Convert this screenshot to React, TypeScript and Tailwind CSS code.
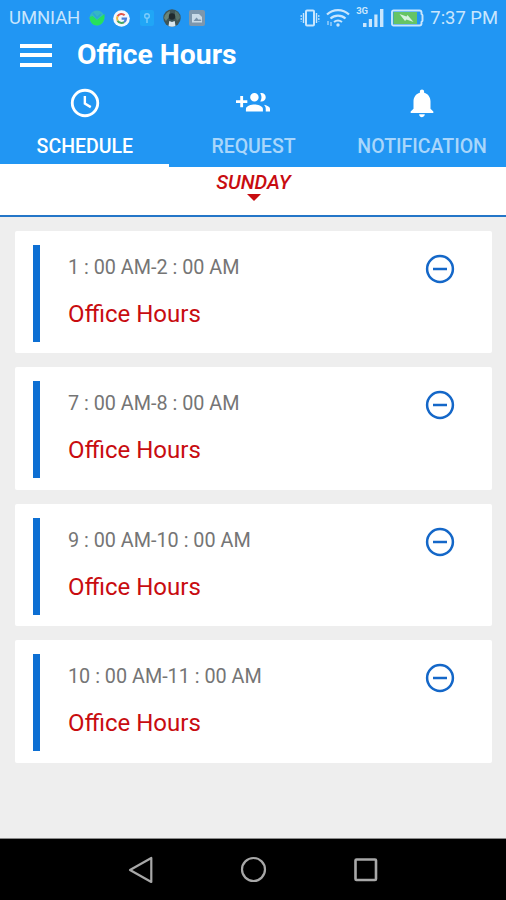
import { useState } from 'react';
import { MdNotifications } from 'react-icons/md';

type IconProps = { className?: string };

const ClockIcon: React.FC<IconProps> = ({ className }) => (
  <svg className={className} viewBox="0 0 24 24" fill="none" stroke="currentColor">
    <circle cx="12" cy="12" r="9" strokeWidth="2" />
    <path d="M11.900 7v5.400l4.200 2.500" strokeWidth="1.700" />
  </svg>
);

const GroupAddIcon: React.FC<IconProps> = ({ className }) => (
  <svg className={className} viewBox="0 0 24 24" fill="currentColor">
    <path d="M8 10H5V7H3v3H0v2h3v3h2v-3h3v-2zm10 1c1.660 0 2.990-1.340 2.990-3S19.660 5 18 5c-.32 0-.63.05-.91.14.57.81.9 1.790.9 2.860s-.34 2.040-.9 2.860c.28.09.59.14.91.14zm-5 0c1.660 0 2.990-1.340 2.990-3S14.660 5 13 5c-1.660 0-3 1.340-3 3s1.340 3 3 3zm6.620 2.160c.83.73 1.380 1.660 1.380 2.840v2h3v-2c0-1.540-2.370-2.490-4.380-2.840zM13 13c-2 0-6 1-6 3v2h12v-2c0-2-4-3-6-3z" />
  </svg>
);

// Tabs shown under the app bar
const tabs = [
  { id: 'schedule', label: 'SCHEDULE', Icon: ClockIcon },
  { id: 'request', label: 'REQUEST', Icon: GroupAddIcon },
  { id: 'notification', label: 'NOTIFICATION', Icon: MdNotifications },
];

const slots = [
  { id: 1, time: '1 : 00 AM-2 : 00 AM', title: 'Office Hours' },
  { id: 2, time: '7 : 00 AM-8 : 00 AM', title: 'Office Hours' },
  { id: 3, time: '9 : 00 AM-10 : 00 AM', title: 'Office Hours' },
  { id: 4, time: '10 : 00 AM-11 : 00 AM', title: 'Office Hours' },
];

const StatusBar: React.FC = () => (
  <div className="flex h-9 items-center justify-between pl-[9px] pr-[8px] text-[#c9e6fd]">
    <div className="flex items-center">
      <span className="w-[80px] whitespace-nowrap text-[18.5px] leading-9 tracking-[-0.1px]">UMNIAH</span>
      <svg className="h-4 w-4" viewBox="0 0 16 16">
        <circle cx="8" cy="8" r="7.500" fill="#35b7c4" />
        <path d="M.600 7l3-1L8 10l7.400-6c.8 6-2 11.500-7.400 11.500C4 15.500.600 12 .600 7z" fill="#26e05c" />
        <path d="M4 3l4 5 4-4" fill="none" stroke="#2ba5d8" strokeWidth="1.500" />
      </svg>
      <svg className="ml-[8px] h-[17px] w-[17px]" viewBox="0 0 17 17">
        <circle cx="8.500" cy="8.500" r="8.300" fill="#f4f8fd" />
        <g fill="none" strokeWidth="2.100">
          <path d="M11.600 5.200A4.500 4.500 0 0 0 4.600 6.300" stroke="#e2574c" />
          <path d="M4.600 6.300a4.500 4.500 0 0 0 0 4.400" stroke="#efb93c" />
          <path d="M4.600 10.700a4.500 4.500 0 0 0 6.500 1.400" stroke="#45a765" />
          <path d="M11.100 12.100A4.500 4.500 0 0 0 13 8.600H8.600" stroke="#4a7fdc" />
        </g>
      </svg>
      <svg className="ml-[10px] h-4 w-[14px]" viewBox="0 0 14 16">
        <rect width="14" height="16" rx="2" fill="#20a6f6" />
        <circle cx="7" cy="6" r="2.300" fill="none" stroke="#7ccdfb" strokeWidth="1.400" />
        <path d="M7 8v5" stroke="#7ccdfb" strokeWidth="1.400" />
      </svg>
      <svg className="ml-[9px] h-[18px] w-[18px]" viewBox="0 0 18 18">
        <circle cx="9" cy="9" r="8.700" fill="#3f5557" />
        <path d="M1 9c1-4 3-6 6-7l-1 6-3 4z" fill="#6b8578" />
        <path d="M12 2c3 1 5 4 5 7l-3 3-2-5z" fill="#56726b" />
        <circle cx="9" cy="7.500" r="3.200" fill="#202a2e" />
        <path d="M5.500 17l.8-5 2.700 1 2.700-1 .8 5c-2 1-5 1-7 0z" fill="#d8e6ed" />
      </svg>
      <svg className="ml-[8px] h-4 w-4" viewBox="0 0 16 16">
        <rect width="16" height="16" rx="2" fill="#7d97ad" />
        <path d="M3 4h7l3 3v5.500H3z" fill="#c9dbe8" />
        <path d="M4.500 11l3-3.500L10 10l1-1 1.500 2z" fill="#7892a9" />
      </svg>
    </div>
    <div className="flex items-center">
      <svg className="h-[18px] w-5" viewBox="0 0 20 18" fill="none" stroke="currentColor">
        <rect x="6" y="1.500" width="8" height="15" rx="1" strokeWidth="2" />
        <path d="M3.500 4v10M16.500 4v10" strokeWidth="1.400" />
        <path d="M1.200 6v6.500M18.800 6v6.500" strokeWidth="1.200" strokeDasharray="2 1" />
      </svg>
      <svg className="ml-[6px] h-[18px] w-6" viewBox="0 0 24 18" fill="none" stroke="currentColor">
        <path d="M1 5.500a16 16 0 0 1 22 0" strokeWidth="2.200" />
        <path d="M4.500 9.500a11 11 0 0 1 15 0" strokeWidth="2.200" />
        <path d="M8 13a6.500 6.500 0 0 1 8 0" strokeWidth="2" />
        <circle cx="12" cy="16" r="1.700" fill="currentColor" stroke="none" />
        <path d="M2 12v4M5 13v4" strokeWidth="1.500" opacity="0.7" />
      </svg>
      <div className="ml-[6px] flex h-[24px] w-[28px]">
        <span className="w-[7px] text-[9.5px] font-bold leading-[9px] tracking-[-0.3px]">3G</span>
        <svg className="mt-[3px] h-[18px] w-[21px]" viewBox="0 0 21 18" fill="currentColor">
          <rect x="0" y="14" width="3.500" height="4" />
          <rect x="5.800" y="10" width="3.200" height="8" />
          <rect x="11.300" y="5.500" width="3.200" height="12.500" />
          <rect x="17" y="0" width="3.400" height="18" />
        </svg>
      </div>
      <svg className="ml-[7px] h-[18px] w-[33px]" viewBox="0 0 33 18">
        <path d="M2.500 1.500h26a2 2 0 0 1 2 2V5q1 .6 1 1.500v5q0 .9-1 1.500v1.500a2 2 0 0 1-2 2h-26a1.500 1.500 0 0 1-1.500-1.500V3a1.500 1.500 0 0 1 1.500-1.500z" fill="none" stroke="currentColor" strokeWidth="1.900" />
        <rect x="2.500" y="3" width="23.500" height="12" fill="#65c466" />
        <path d="M8.500 5l7 2.500 1-1.500 6 7-7-2.500-1.500 1.500z" fill="#d5f3e0" />
      </svg>
      <span className="ml-[6px] whitespace-nowrap text-[18.4px] leading-9">7:37 PM</span>
    </div>
  </div>
);

const NavigationBar: React.FC = () => (
  <div className="flex h-[62px] items-center justify-center gap-[84px] border-t border-[#8a8a8a] bg-black text-[#a8a8a8]">
    <svg className="h-7 w-7" viewBox="0 0 28 28" fill="none" stroke="currentColor" strokeWidth="2.200" strokeLinejoin="round">
      <path d="M24.300 2v24L3 14z" />
    </svg>
    <svg className="h-7 w-7" viewBox="0 0 28 28" fill="none" stroke="currentColor" strokeWidth="2.200">
      <circle cx="14.500" cy="13.500" r="11.500" />
    </svg>
    <svg className="h-7 w-7" viewBox="0 0 28 28" fill="none" stroke="currentColor" strokeWidth="2.600">
      <rect x="4.500" y="3.500" width="20.500" height="20.500" rx="1" />
    </svg>
  </div>
);

const App: React.FC = () => {
  const [activeTab, setActiveTab] = useState('schedule');

  return (
    <div className="flex h-[900px] w-[506px] flex-col overflow-hidden bg-[#eeeeee] font-['Roboto',sans-serif]">
      <header className="flex h-[167px] flex-col bg-[#2196f3]">
        <StatusBar />

        {/* App bar */}
        <div className="flex h-[40px] items-center pb-[2px] pl-5 text-white">
          <button className="flex h-[23px] w-8 flex-col justify-between" aria-label="Menu">
            <span className="h-1 w-full bg-white"></span>
            <span className="h-1 w-full bg-white"></span>
            <span className="h-1 w-full bg-white"></span>
          </button>
          <h1 className="ml-[25px] whitespace-nowrap text-[28.3px] font-bold leading-[38px]">Office Hours</h1>
        </div>

        {/* Tabs */}
        <div className="grid flex-1 grid-cols-3">
          {tabs.map(({ id, label, Icon }) => (
            <button
              key={id}
              onClick={() => setActiveTab(id)}
              className={`flex flex-col items-center border-b-3 pl-px pt-[10px] ${
                activeTab === id ? 'border-white text-white' : 'border-transparent text-[#a9d6fb]'
              }`}
            >
              <Icon className="h-[34px] w-[34px] text-white" />
              <span className="mt-[15px] whitespace-nowrap text-[19.5px] font-medium leading-6">{label}</span>
            </button>
          ))}
        </div>
      </header>

      {/* Day picker */}
      <div className="flex h-[50px] flex-col items-center border-b-2 border-[#2476c8] bg-white pl-px pt-1">
        <span className="text-[20px] font-medium italic leading-[23px] text-[#c80c10]">SUNDAY</span>
        <svg className="h-[7px] w-[14px]" viewBox="0 0 14 7">
          <path d="M0 0h14L7 7z" fill="#c80c10" />
        </svg>
      </div>

      <main className="flex flex-1 flex-col gap-[14px] pl-[15px] pr-[14px] pt-[14px]">
        {slots.map((slot) => (
          <div key={slot.id} className="flex h-[122.4px] rounded-[2px] bg-white pl-[18px] pr-[35px] pt-[14px]">
            <div className="h-[97px] w-[7px] bg-[#0d6fd3]"></div>
            <div className="ml-7 flex-1 whitespace-nowrap">
              <p className="pt-[11px] text-[19.8px] leading-6 text-[#757575]">{slot.time}</p>
              <p className="mt-[19px] text-[24px] leading-[30px] text-[#c80c10]">{slot.title}</p>
            </div>
            <button className="mt-[7px] h-[34px] w-[34px] text-[#1467c8]" aria-label="Remove">
              <svg className="h-[34px] w-[34px]" viewBox="0 0 34 34" fill="none" stroke="currentColor">
                <circle cx="17" cy="17" r="12.900" strokeWidth="2.500" />
                <path d="M10 17h14" strokeWidth="2.500" />
              </svg>
            </button>
          </div>
        ))}
      </main>

      <NavigationBar />
    </div>
  );
};

export default App;
